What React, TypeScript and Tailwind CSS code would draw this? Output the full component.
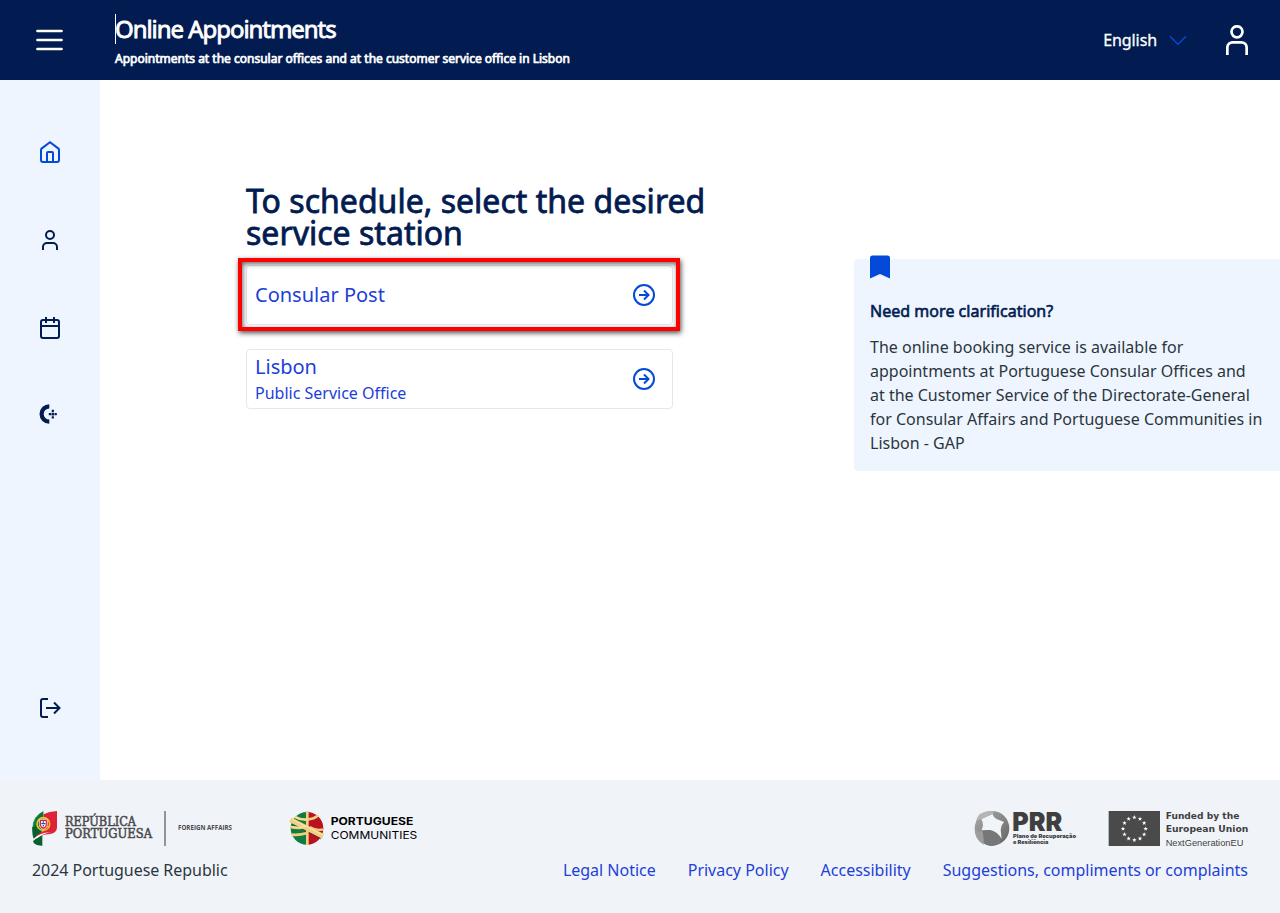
import React from 'react';

const footerLinks = ['Legal Notice', 'Privacy Policy', 'Accessibility', 'Suggestions, compliments or complaints'];

const sideIcons = [
  {
    name: 'Home',
    color: 'text-[#034ad8]',
    paths: ['M3.8 8.4l8.2-6.2 8.2 6.2q.8.6.8 1.6V20q0 2-2 2H5q-2 0-2-2V10q0-1 .8-1.6z', 'M9 22v-9a1 1 0 0 1 1-1h4a1 1 0 0 1 1 1v9'],
  },
  {
    name: 'Profile',
    color: 'text-[#021c51]',
    paths: ['M16 7a4 4 0 1 1-8 0 4 4 0 0 1 8 0z', 'M5 22v-3a4 4 0 0 1 4-4h6a4 4 0 0 1 4 4v3'],
  },
  {
    name: 'Appointments',
    color: 'text-[#021c51]',
    paths: ['M5 4h14a2 2 0 0 1 2 2v14a2 2 0 0 1-2 2H5a2 2 0 0 1-2-2V6a2 2 0 0 1 2-2z', 'M8 1v6M16 1v6M3 10h18'],
  },
];

function StrokeIcon({ paths }: { paths: string[] }) {
  return (
    <svg width="24" height="24" viewBox="0 0 24 24" fill="none" stroke="currentColor" strokeWidth="2">
      {paths.map((d) => (
        <path key={d} d={d} />
      ))}
    </svg>
  );
}

function CircleArrow() {
  return (
    <svg width="24" height="24" viewBox="0 0 24 24" fill="none" stroke="#034ad8" strokeWidth="2">
      <circle cx="12" cy="12" r="10" />
      <path d="M7 12h9M12 7.5l4.5 4.5-4.5 4.5" />
    </svg>
  );
}

function Header() {
  return (
    <header className="flex h-20 items-center bg-[#021c51] text-white">
      <button className="ml-9">
        <svg width="27" height="22" viewBox="0 0 27 22" fill="none" stroke="white" strokeWidth="2.7" strokeLinecap="round">
          <path d="M1.5 2h24M1.5 11h24M1.5 20h24" />
        </svg>
      </button>
      <div className="ml-[52px] flex h-20 flex-col pt-3.5">
        <h1 className="h-[30px] w-fit border-l border-white text-2xl leading-[29px] tracking-[-1.05px] whitespace-nowrap [-webkit-text-stroke:0.8px_white]">
          <span className="-ml-px">Online Appointments</span>
        </h1>
        <p className="mt-[5px] text-xs leading-5 whitespace-nowrap [-webkit-text-stroke:0.7px_white]">
          Appointments at the consular offices and at the customer service office in Lisbon
        </p>
      </div>
      <div className="mr-8 ml-auto flex items-center">
        <span className="text-base tracking-[-0.1px] [-webkit-text-stroke:0.3px_white]">English</span>
        <svg className="ml-3" width="18" height="11" viewBox="0 0 18 11" fill="none" stroke="#034ad8" strokeWidth="1.4">
          <path d="M1 1.2l8 8 8-8" />
        </svg>
        <svg className="ml-[39px]" width="22" height="30" viewBox="0 0 22 30" fill="none" stroke="white" strokeWidth="2.7">
          <circle cx="11" cy="6.8" r="5.5" />
          <path d="M1.35 30v-7.5a5.3 5.3 0 0 1 5.3-5.2h8.7a5.3 5.3 0 0 1 5.3 5.2V30" />
        </svg>
      </div>
    </header>
  );
}

function Sidebar() {
  return (
    <nav className="flex w-[100px] shrink-0 flex-col items-center bg-[#eef5ff] pt-15 pb-15">
      <div className="flex flex-col gap-16">
        {sideIcons.map((icon) => (
          <a key={icon.name} aria-label={icon.name} className={icon.color}>
            <StrokeIcon paths={icon.paths} />
          </a>
        ))}
        <svg className="-mt-0.5" width="24" height="24" viewBox="0 0 24 24">
          <path d="M11.3 4.3a7.7 7.7 0 0 0 0 15.4" fill="none" stroke="#021c51" strokeWidth="4.2" />
          <path
            d="M13.7 7.7h2.2v2.2h-2.2zM13.5 10.8h2.6v2.6h-2.6zM13.7 14.3h2.2v2.2h-2.2zM10.8 11H13v2.2h-2.2zM16.6 11h2.2v2.2h-2.2z"
            fill="#021c51"
          />
        </svg>
      </div>
      <a aria-label="Sign out" className="mt-auto text-[#021c51]">
        <StrokeIcon paths={['M10 3H5a2 2 0 0 0-2 2v14a2 2 0 0 0 2 2h5', 'M8 12h13.5M16 6.5l5.5 5.5-5.5 5.5']} />
      </a>
    </nav>
  );
}

function StationCard({ title, subtitle }: { title: string; subtitle?: string }) {
  return (
    <a className="flex h-[60px] w-[427px] items-center justify-between rounded border border-[#e2e8f0] pr-4 pl-2 text-[#1d40d8]">
      <div>
        <div className="text-xl leading-7">{title}</div>
        {subtitle && <div className="text-base leading-6">{subtitle}</div>}
      </div>
      <CircleArrow />
    </a>
  );
}

function HelpBox() {
  return (
    <aside className="mt-[179px] h-[212px] w-[426px] rounded-l bg-[#eef5ff] px-4">
      <svg className="-mt-1" width="20" height="24" viewBox="0 0 20 24" fill="#034ad8">
        <path d="M0 3Q0 .5 2.5 .5h15q2.5 0 2.5 2.5v20.5l-10-4.5-10 4.5z" />
      </svg>
      <h2 className="mt-5 text-base leading-6 tracking-[0.03px] text-[#021c51] [-webkit-text-stroke:0.6px_#021c51]">
        Need more clarification?
      </h2>
      <p className="mt-3 text-base leading-6 whitespace-nowrap text-[#2b363c]">
        The online booking service is available for
        <br />
        appointments at Portuguese Consular Offices and
        <br />
        at the Customer Service of the Directorate-General
        <br />
        for Consular Affairs and Portuguese Communities in
        <br />
        Lisbon - GAP
      </p>
    </aside>
  );
}

function RepublicLogo() {
  return (
    <svg width="204" height="37" viewBox="36 30 612 111">
      <path d="M70 34Q36 50 38 84l4 31q24-13 28-31z" fill="#1f9a48" />
      <path d="M70 34Q44 48 41 82l3 24 20-12z" fill="#0c7539" />
      <path d="M37 80q-2 20 4 36l24-18-8-20z" fill="#07602f" />
      <path d="M39 124q8-10 28-18v31q-24 1-28-13z" fill="#07602f" />
      <path d="M70 43q18-9 41-10v50q-1 16-21 19-30 2-48 16 4-12 28-25z" fill="#dc2337" />
      <path d="M38 120q12-15 34-21l20-3q-28 8-40 18z" fill="#fff" />
      <circle cx="70" cy="72" r="19" fill="none" stroke="#e8c326" strokeWidth="5" />
      <path d="M54 62q20 16 34 20M54 82q20-8 34-20M70 52v40" fill="none" stroke="#e8c326" strokeWidth="3" />
      <path d="M58 58h24v17q-2 11-12 13-10-2-12-13z" fill="#d92436" stroke="#fff" strokeWidth="2" />
      <path d="M63 63h14v11q-1 7-7 8-6-1-7-8z" fill="#fff" />
      <path d="M68 64h4v4h-4zM64 69h4v4h-4zM72 69h4v4h-4zM68 69h4v4h-4zM68 75h4v4h-4z" fill="#274b9b" />
      <g className="font-['DejaVu_Serif']" fill="#4a4a4c" stroke="#4a4a4c" strokeWidth="1.6">
        <text x="135" y="78" fontSize="37" textLength="213" lengthAdjust="spacingAndGlyphs">
          REPÚBLICA
        </text>
        <text x="135" y="113" fontSize="37" textLength="261" lengthAdjust="spacingAndGlyphs">
          PORTUGUESA
        </text>
      </g>
      <path d="M435 33v105" stroke="#808285" strokeWidth="5" />
      <text
        x="474"
        y="90"
        fontSize="20"
        textLength="162"
        lengthAdjust="spacingAndGlyphs"
        className="font-['Open_Sans'] font-bold"
        fill="#4a4a4c"
      >
        FOREIGN AFFAIRS
      </text>
    </svg>
  );
}

function CommunitiesLogo() {
  return (
    <svg width="130" height="37" viewBox="42 30 390 111">
      <path d="M96 36a48 48 0 0 0 0 98z" fill="#107c3e" />
      <path d="M96 36a48 48 0 0 1 0 98z" fill="#b8131f" />
      <path d="M54 70l86 45" fill="none" stroke="#4b2a16" strokeOpacity="0.4" strokeWidth="10" />
      <g fill="none" stroke="#f1cf82">
        <path d="M97 33v102" strokeWidth="8" />
        <path d="M60 51q20 10 36 8 22-2 34-13M46 81q24 6 50 0M50 104q24 2 44-4" strokeWidth="8" />
        <path d="M104 81q20 12 40 7" strokeWidth="7" />
        <path d="M46 59l98 50" strokeWidth="15" />
      </g>
      <path d="M50 57l94 48M60 52q20 8 36 5M48 79q22 6 46 0" fill="none" stroke="#fbe9b5" strokeWidth="3" />
      <text x="167" y="76" fontSize="31" textLength="248" lengthAdjust="spacingAndGlyphs" className="font-['Inter'] font-bold">
        PORTUGUESE
      </text>
      <text x="167" y="118" fontSize="32" textLength="260" lengthAdjust="spacingAndGlyphs" className="font-['Inter'] font-normal">
        COMMUNITIES
      </text>
    </svg>
  );
}

function PrrLogo() {
  return (
    <svg className="overflow-visible" width="103" height="37" viewBox="42 30 309 111">
      <defs>
        <linearGradient id="ring" x1="0" y1="0" x2="1" y2="1">
          <stop offset="0" stopColor="#a9a9a9" />
          <stop offset="0.55" stopColor="#858585" />
          <stop offset="1" stopColor="#5e5e5e" />
        </linearGradient>
      </defs>
      <circle cx="96" cy="85" r="52" fill="url(#ring)" />
      <path d="M45 88q9 10 23 6l4 40Q43 120 45 88z" fill="#9c9c9c" />
      <path d="M68 94q20-8 48 0l6 34q-24 17-48 4z" fill="#777" />
      <path d="M64 57l34-15q1 9 12 15l22 9q-13 16-9 32l2 19q-12-22-34-27l-26 0q8-16-1-33z" fill="#f1f4f9" />
      <path d="M58 43q22-13 44-9l-4 8-36 15q-8 2-14 8 2-12 10-22z" fill="#b5b5b5" />
      <text
        x="157"
        y="93"
        fontSize="78"
        textLength="150"
        lengthAdjust="spacingAndGlyphs"
        className="font-['Inter'] font-black"
        fill="#3f3f40"
      >
        PRR
      </text>
      <g className="font-['Inter'] font-black" fill="#3f3f40">
        <text x="159" y="113" fontSize="16" textLength="189" lengthAdjust="spacingAndGlyphs">
          Plano de Recuperação
        </text>
        <text x="159" y="131" fontSize="16" textLength="106" lengthAdjust="spacingAndGlyphs">
          e Resiliência
        </text>
      </g>
    </svg>
  );
}

function EuLogo() {
  // twelve stars on a ring
  const stars = Array.from({ length: 12 }, (_, i) => {
    const angle = (i * Math.PI) / 6;
    return { x: 523 + 34 * Math.sin(angle), y: 86 - 34 * Math.cos(angle) };
  });

  return (
    <svg width="142" height="37" viewBox="444 30 426 111">
      <path d="M446 33h154v105H446z" fill="#4a4a4a" />
      {stars.map((s, i) => (
        <path
          key={i}
          transform={`translate(${s.x} ${s.y}) scale(1.25)`}
          d="M0-5.5l1.4 3.8h4L2.2.8 3.4 4.6 0 2.3l-3.4 2.3L-2.2.8l-3.2-2.5h4z"
          fill="white"
        />
      ))}
      <g className="font-['DejaVu_Sans'] font-bold" fill="#3f3f40">
        <text x="617" y="56" fontSize="27" textLength="221" lengthAdjust="spacingAndGlyphs">
          Funded by the
        </text>
        <text x="617" y="95" fontSize="27" textLength="248" lengthAdjust="spacingAndGlyphs">
          European Union
        </text>
      </g>
      <text
        x="617"
        y="137"
        fontSize="29"
        textLength="233"
        lengthAdjust="spacingAndGlyphs"
        className="font-['Liberation_Sans']"
        fill="#3f3f40"
      >
        NextGenerationEU
      </text>
    </svg>
  );
}

function Footer() {
  return (
    <footer className="h-[133px] bg-[#f0f4f9] px-8 pt-[30px]">
      <div className="flex items-start">
        <RepublicLogo />
        <div className="ml-[53px]">
          <CommunitiesLogo />
        </div>
        <div className="-mr-0.5 ml-auto flex gap-[31px]">
          <PrrLogo />
          <EuLogo />
        </div>
      </div>
      <div className="mt-[11px] flex justify-between text-base leading-6">
        <span className="tracking-[-0.04px] text-[#2b363c]">2024 Portuguese Republic</span>
        <div className="flex gap-8 tracking-[-0.01px] text-[#1d40d8]">
          {footerLinks.map((link) => (
            <a key={link}>{link}</a>
          ))}
        </div>
      </div>
    </footer>
  );
}

export default function App() {
  return (
    <div className="flex h-[913px] w-[1280px] flex-col overflow-hidden bg-white font-['Noto_Sans',sans-serif]">
      <Header />
      <div className="flex h-[700px]">
        <Sidebar />
        <main className="flex flex-1 justify-between pl-[146px]">
          <section className="pt-[105px]">
            <h2 className="w-[480px] text-[32px] leading-8 tracking-[0.02px] text-[#021c51] [-webkit-text-stroke:0.8px_#021c51]">
              To schedule, select the desired service station
            </h2>
            <div className="relative mt-4">
              <StationCard title="Consular Post" />
              <div className="pointer-events-none absolute -top-[7px] -left-2 h-[73px] w-[442px] border-4 border-[#fe0000] shadow-[1px_2px_5px_rgba(0,0,0,0.7),inset_1px_2px_5px_rgba(0,0,0,0.6)]" />
            </div>
            <div className="mt-6">
              <StationCard title="Lisbon" subtitle="Public Service Office" />
            </div>
          </section>
          <HelpBox />
        </main>
      </div>
      <Footer />
    </div>
  );
}
